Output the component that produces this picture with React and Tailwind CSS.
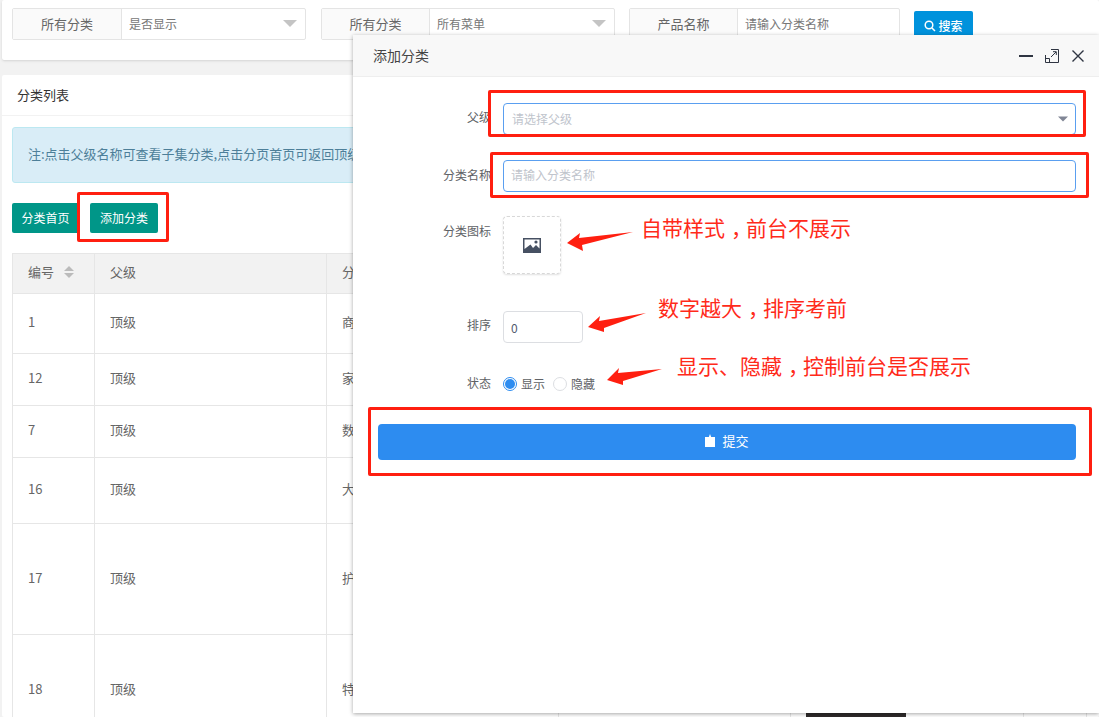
const rows = [
  { id: "1", name: "商品分类", h: "h-[60px]" },
  { id: "12", name: "家居用品", h: "h-[52px]" },
  { id: "7", name: "数码产品", h: "h-[52px]" },
  { id: "16", name: "大家电", h: "h-[66px]" },
  { id: "17", name: "护肤美妆", h: "h-[111px]" },
  { id: "18", name: "特色产品", h: "h-[111px]" },
];

const Caret = ({ className }) => (
  <svg viewBox="0 0 14 7" className={className}>
    <polygon points="0,0 14,0 7,7" fill="currentColor" />
  </svg>
);

const FilterGroup = ({ label, value, caret, labelW, width, className }) => (
  <div
    className={`flex h-[32px] border border-[#e4e4e4] rounded-[2px] bg-white ${width} ${className}`}
  >
    <div
      className={`${labelW} shrink-0 flex items-center justify-center pb-[1px] bg-[#fafafa] border-r border-[#e4e4e4] text-[13px] text-[#666]`}
    >
      {label}
    </div>
    <div className="flex-1 flex items-center justify-between pl-[7px] pr-[8px] pb-[1px] text-[12px] text-[#777]">
      <span>{value}</span>
      {caret && <Caret className="w-[14px] h-[7px] text-[#c4c4c4]" />}
    </div>
  </div>
);

const RedBox = ({ className }) => (
  <div
    className={`absolute border-[3px] border-[#ff1f10] rounded-[2px] pointer-events-none ${className}`}
  />
);

const Arrow = ({ points, className, w, h }) => (
  <svg viewBox={`0 0 ${w} ${h}`} className={`absolute ${className}`}>
    <polygon points={points} fill="#ff1f10" />
  </svg>
);

const Note = ({ children, className }) => (
  <div
    className={`absolute flex text-[21px] leading-[28px] text-[#ff2a1a] whitespace-nowrap ${className}`}
  >
    {children}
  </div>
);

// the full-width comma sits mid-cell in the reference, not at the left
const Comma = () => <span className="pl-[6px] pr-[9px] tracking-[-15px]">，</span>;

const FormRow = ({ label, className, labelClass = "", children }) => (
  <div className={`flex items-start ${className}`}>
    <label className={`w-[138px] shrink-0 text-right text-[12px] text-[#606266] leading-[28px] ${labelClass}`}>
      {label}
    </label>
    <div className="ml-[12px] flex-1">{children}</div>
  </div>
);

export default function App() {
  return (
    <div className="relative h-[717px] w-[1099px] overflow-hidden bg-[#f2f2f2] pl-[2px] font-['Noto_Sans_CJK_SC',sans-serif]">
      {/* search bar */}
      <div className="h-[60px] bg-white rounded-[2px] shadow-sm flex items-start pt-[8px] pl-[10px]">
        <FilterGroup label="所有分类" value="是否显示" caret labelW="w-[109px]" width="w-[294px]" />
        <FilterGroup label="所有分类" value="所有菜单" caret labelW="w-[108px]" width="w-[294px]" className="ml-[15px]" />
        <FilterGroup label="产品名称" value="请输入分类名称" labelW="w-[108px]" width="w-[271px]" className="ml-[14px]" />
        <button className="ml-[14px] mt-[3px] w-[59px] h-[30px] bg-[#0092dc] rounded-[2px] text-white text-[12px] font-medium flex items-center justify-center gap-[2px]">
          <svg viewBox="0 0 12 12" className="w-[12px] h-[12px]" fill="none" stroke="currentColor" strokeWidth="1.5">
            <circle cx="5" cy="5" r="3.8" />
            <path d="M8 8l3 3" />
          </svg>
          搜索
        </button>
      </div>

      {/* list card */}
      <div className="mt-[15px] bg-white rounded-[2px] h-[642px] overflow-hidden">
        <div className="h-[41px] border-b border-[#f2f2f2] pl-[15px] flex items-center text-[13px] text-[#333]">
          分类列表
        </div>
        <div className="mt-[11px] ml-[10px] h-[56px] bg-[#d9edf7] border border-[#bce8f1] rounded-[3px] pl-[15px] pb-[3px] flex items-center text-[13px] text-[#4d7f99] whitespace-nowrap">
          注:点击父级名称可查看子集分类,点击分页首页可返回顶级分类
        </div>
        <div className="mt-[20px] ml-[10px] flex gap-[11px]">
          <button className="w-[67px] h-[30px] pb-[1px] bg-[#009688] rounded-[2px] text-white text-[12px]">分类首页</button>
          <button className="w-[68px] h-[30px] pb-[1px] bg-[#009688] rounded-[2px] text-white text-[12px]">添加分类</button>
        </div>

        <table className="mt-[20px] ml-[10px] w-[1075px] table-fixed border-collapse text-[13px] text-[#666]">
          <colgroup>
            <col className="w-[82px]" />
            <col className="w-[232px]" />
            <col className="w-[232px]" />
            <col className="w-[232px]" />
            <col className="w-[233px]" />
            <col />
          </colgroup>
          <thead>
            <tr className="h-[40px] bg-[#f2f2f2]">
              <th className="border border-[#e6e6e6] pl-[15px] pb-[3px] text-left font-normal">
                <span className="inline-flex items-center gap-[10px]">
                  编号
                  <span className="inline-flex flex-col gap-[2px] text-[#bbb]">
                    <Caret className="w-[10px] h-[5px] rotate-180" />
                    <Caret className="w-[10px] h-[5px]" />
                  </span>
                </span>
              </th>
              <th className="border border-[#e6e6e6] pl-[15px] pb-[3px] text-left font-normal">父级</th>
              <th className="border border-[#e6e6e6] pl-[15px] pb-[3px] text-left font-normal">分类名称</th>
              <th className="border border-[#e6e6e6]" />
              <th className="border border-[#e6e6e6]" />
              <th className="border border-[#e6e6e6]" />
            </tr>
          </thead>
          <tbody>
            {rows.map((r, i) => (
              <tr key={r.id} className={r.h}>
                <td className="border border-[#e6e6e6] pl-[15px] pb-[3px]">{r.id}</td>
                <td className="border border-[#e6e6e6] pl-[15px] pb-[3px]">顶级</td>
                <td className="border border-[#e6e6e6] pl-[15px] pb-[3px]">{r.name}</td>
                <td className="border border-[#e6e6e6]" />
                <td className="border border-[#e6e6e6] pl-[15px] align-top">
                  {i === 5 && <div className="mt-[5px] w-[100px] h-[100px] bg-[#2e2a2a]" />}
                </td>
                <td className="border border-[#e6e6e6]" />
              </tr>
            ))}
          </tbody>
        </table>
      </div>

      <RedBox className="left-[77px] top-[192px] w-[92px] h-[50px]" />

      {/* add dialog */}
      <div className="absolute left-[353px] top-[35px] w-[746px] h-[678px] bg-white shadow-[0_1px_4px_rgba(0,0,0,0.35)]">
        <div className="h-[42px] bg-[#f8f8f8] border-b border-[#eee] flex items-center pl-[20px] pr-[15px] text-[14px] text-[#444]">
          <span className="flex-1">添加分类</span>
          <div className="flex items-center text-[#2f3542]">
            <svg viewBox="0 0 14 14" className="w-[14px] h-[14px]">
              <path d="M0 7h14" stroke="currentColor" strokeWidth="2" />
            </svg>
            <svg viewBox="0 0 14 14" className="ml-[12px] w-[14px] h-[14px]" fill="none" stroke="currentColor">
              <path d="M6 .5h7.500v13H.5V6" />
              <path d="M.5 9.500h4v4" />
              <path d="M6 8l5-5M8 2.700h3.300V6" />
            </svg>
            <svg viewBox="0 0 12 12" className="ml-[13px] w-[12px] h-[12px]" fill="none" stroke="currentColor" strokeWidth="1.4">
              <path d="M.5.5l11 11M11.500.5l-11 11" />
            </svg>
          </div>
        </div>

        <div className="pr-[23px]">
          <FormRow label="父级" className="mt-[26px]">
            <div className="h-[32px] border border-[#5a9ff0] rounded-[4px] flex items-center justify-between pl-[8px] pr-[7px] text-[12px] text-[#c0c4cc]">
              请选择父级
              <Caret className="w-[10px] h-[6px] text-[#808695]" />
            </div>
          </FormRow>
          <FormRow label="分类名称" className="mt-[25px]" labelClass="mt-[1px]">
            <input
              readOnly
              placeholder="请输入分类名称"
              className="w-full h-[32px] border border-[#5a9ff0] rounded-[4px] pl-[7px] pb-[3px] text-[12px] outline-none placeholder:text-[#c0c4cc]"
            />
          </FormRow>
          <FormRow label="分类图标" className="mt-[24px]" labelClass="mt-[1px]">
            <div className="w-[58px] h-[58px] border border-dashed border-[#d8d8d8] rounded-[4px] shadow-[0_1px_2px_rgba(0,0,0,0.12)] flex items-center justify-center">
              <svg viewBox="0 0 18 15" className="w-[18px] h-[15px]">
                <path d="M0 0h18v15H0z" fill="#465062" />
                <path d="M1.500 1.500h15v9l-3.500-3.500-3 3-2.500-3.500L1.500 11z" fill="#fff" />
                <circle cx="13" cy="4" r="1.600" fill="#465062" />
              </svg>
            </div>
          </FormRow>
          <FormRow label="排序" className="mt-[37px]">
            <input
              readOnly
              value="0"
              className="w-[80px] h-[32px] border border-[#dcdee2] rounded-[4px] pl-[7px] text-[12px] text-[#515a6e] outline-none"
            />
          </FormRow>
          <FormRow label="状态" className="mt-[26px]">
            <div className="flex items-center h-[28px] pt-[1px] text-[12px] text-[#606266]">
              <span className="w-[14px] h-[14px] rounded-full border border-[#2d8cf0] flex items-center justify-center">
                <span className="w-[10px] h-[10px] rounded-full bg-[#2d8cf0]" />
              </span>
              <span className="ml-[4px]">显示</span>
              <span className="ml-[8px] w-[14px] h-[14px] rounded-full border border-[#dcdee2]" />
              <span className="ml-[4px]">隐藏</span>
            </div>
          </FormRow>
          <button className="mt-[27px] ml-[25px] w-[698px] h-[36px] pb-[3px] bg-[#2d8cf0] rounded-[4px] flex items-center justify-center gap-[7px] text-white text-[13px]">
            <svg viewBox="0 0 10 13" className="w-[10px] h-[13px] mb-[1px]" fill="#fff">
              <path d="M0 3h3.800L5 0l1.200 3H10v10H0z" />
            </svg>
            提交
          </button>
        </div>
      </div>

      {/* annotations */}
      <RedBox className="left-[488px] top-[90px] w-[598px] h-[47px]" />
      <RedBox className="left-[490px] top-[152px] w-[599px] h-[46px]" />
      <RedBox className="left-[368px] top-[407px] w-[724px] h-[69px]" />

      <Arrow w={67} h={19} points="0,11 13,1 12,6 66,0 15,13 16,19" className="left-[567px] top-[232px] w-[67px] h-[19px]" />
      <Arrow w={58} h={19} points="0,14 12,3 11,8 58,0 16,15 16,19" className="left-[588px] top-[313px] w-[58px] h-[19px]" />
      <Arrow w={55} h={17} points="0,12 12,0 11,5 55,1 16,13 16,17" className="left-[607px] top-[368px] w-[55px] h-[17px]" />

      <Note className="left-[641px] top-[213px]"><span>自带样式</span><Comma /><span>前台不展示</span></Note>
      <Note className="left-[658px] top-[293px]"><span>数字越大</span><Comma /><span>排序考前</span></Note>
      <Note className="left-[677px] top-[351px]"><span>显示、隐藏</span><Comma /><span>控制前台是否展示</span></Note>
    </div>
  );
}
